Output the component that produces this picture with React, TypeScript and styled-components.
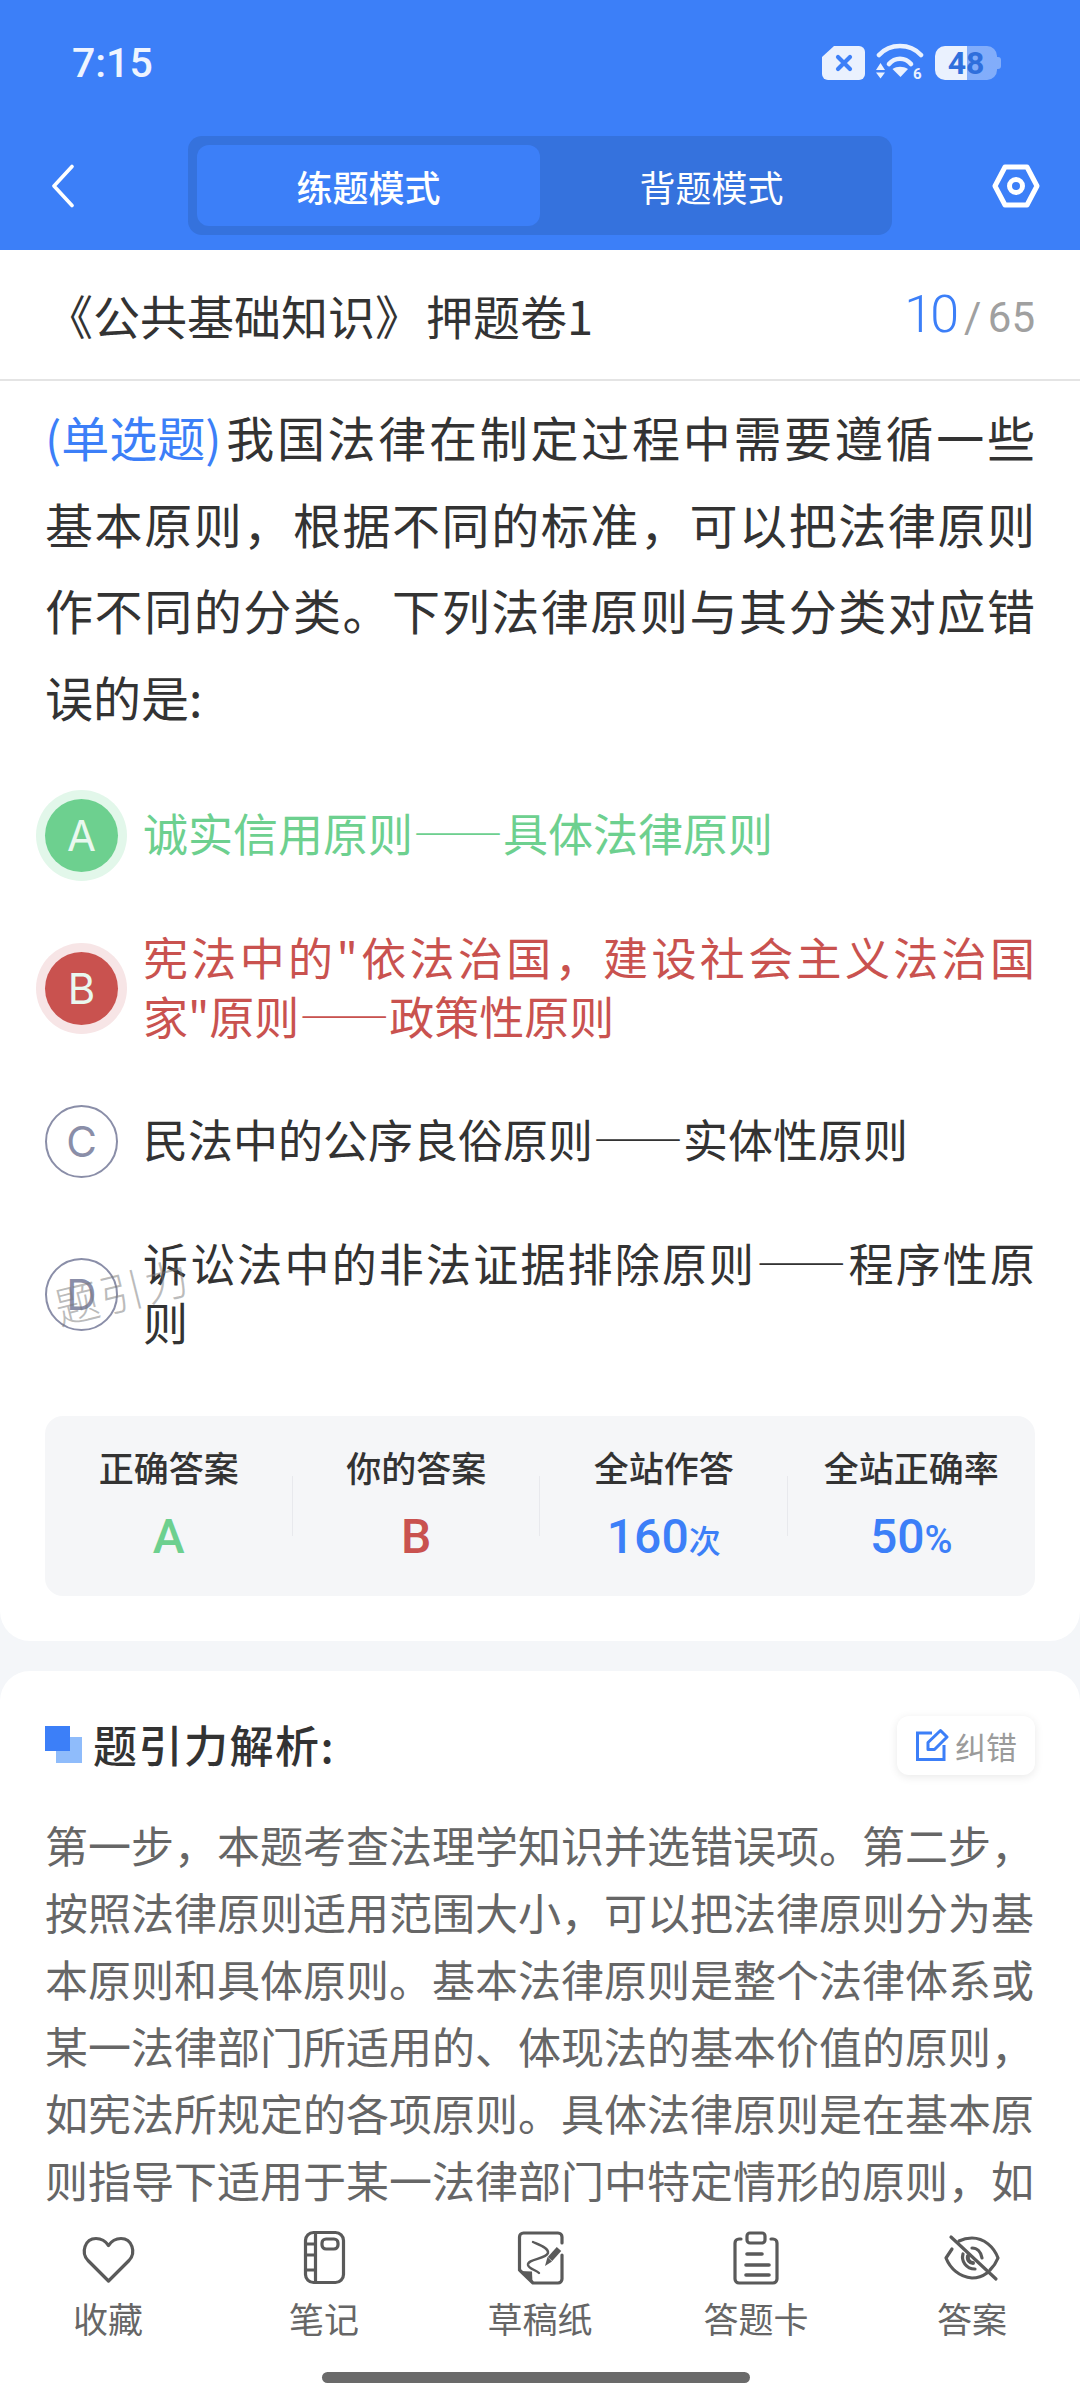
import React from "react";
import styled, { createGlobalStyle } from "styled-components";

const BLUE = "#3c7ff8";
const GREEN = "#6dd08f";
const RED = "#c9524f";
const CJK = `"Noto Sans CJK SC", "Noto Sans", sans-serif`;
const LATIN = `Roboto, "Noto Sans CJK SC", sans-serif`;

const Global = createGlobalStyle`
  html, body { margin: 0; padding: 0; background: #f4f6f9; }
  * { box-sizing: border-box; }
  body { font-family: ${CJK}; }
`;

const Page = styled.div`
  position: relative;
  width: 1080px;
  height: 2400px;
  overflow: hidden;
  background: #f4f6f9;
  display: flex;
  flex-direction: column;
`;

const Header = styled.header`
  height: 250px;
  background: ${BLUE};
`;

const StatusBar = styled.div`
  height: 136px;
  padding: 0 83px 10px 72px;
  display: flex;
  align-items: center;
  justify-content: space-between;
`;

const Clock = styled.span`
  font: 500 41px/1 ${LATIN};
  color: #eef4ff;
`;

const StatusIcons = styled.div`
  display: flex;
  align-items: center;
  gap: 11px;
`;

const Battery = styled.div`
  position: relative;
  width: 62px;
  height: 34px;
  border-radius: 10px;
  background: linear-gradient(to right, #eaf1fe 0 52%, rgba(255, 255, 255, 0.36) 52% 100%);
  display: flex;
  align-items: center;
  justify-content: center;
  font: 700 32px/1 ${LATIN};
  color: #2f6fdc;
  &::after {
    content: "";
    position: absolute;
    right: -4px;
    top: 11px;
    width: 4px;
    height: 12px;
    border-radius: 0 3px 3px 0;
    background: rgba(255, 255, 255, 0.36);
  }
`;

const NavBar = styled.nav`
  height: 99px;
  padding-right: 40px;
  display: flex;
  align-items: center;
`;

const BackSlot = styled.div`
  width: 188px;
  padding-left: 51px;
  display: flex;
  align-items: center;
`;

const Tabs = styled.div`
  width: 704px;
  height: 99px;
  padding: 9px;
  border-radius: 14px;
  background: #3572dd;
  display: grid;
  grid-template-columns: 343px 1fr;
`;

const Tab = styled.div<{ $active?: boolean }>`
  display: flex;
  align-items: center;
  justify-content: center;
  border-radius: 12px;
  font-size: 36px;
  line-height: 1;
  font-weight: ${(p) => (p.$active ? 500 : 400)};
  color: #fff;
  background: ${(p) => (p.$active ? BLUE : "transparent")};
`;

const SettingsSlot = styled.div`
  margin-left: auto;
  display: flex;
`;

const TitleRow = styled.div`
  flex: none;
  height: 131px;
  padding: 0 45px 0 46px;
  background: #fff;
  border-bottom: 2px solid #e4e4e4;
  display: flex;
  align-items: center;
  justify-content: space-between;
`;

const PaperTitle = styled.h1`
  margin: 0;
  font-size: 47px;
  line-height: 1;
  font-weight: 400;
  color: #333;
`;

const TitleSuffix = styled.span`
  margin-left: 4px;
`;

const Progress = styled.div`
  display: flex;
  align-items: baseline;
  gap: 8px;
  font-family: ${LATIN};
`;

const Current = styled.span`
  font-size: 52px;
  font-weight: 300;
  letter-spacing: -3px;
  color: ${BLUE};
`;

const Total = styled.span`
  font-size: 42px;
  font-weight: 400;
  word-spacing: -4px;
  color: #a0a0a0;
`;

const QuestionCard = styled.section`
  flex: none;
  background: #fff;
  border-radius: 0 0 30px 30px;
  padding: 12px 45px 45px;
`;

const Question = styled.p`
  margin: 0;
  font-size: 48px;
  line-height: 86.5px;
  color: #333;
  text-align: justify;
`;

const Tag = styled.span`
  display: inline-block;
  margin-right: 2px;
  color: ${BLUE};
`;

const NoBreak = styled.span`
  white-space: nowrap;
`;

const Dash = styled.span`
  font-feature-settings: "fwid";
`;

const Options = styled.div`
  margin-top: 60px;
  display: flex;
  flex-direction: column;
  gap: 54.5px;
`;

const tones = {
  right: { main: GREEN, halo: "#e2f7ea" },
  wrong: { main: RED, halo: "#f7e5e6" },
};

const OptionRow = styled.div`
  display: flex;
  align-items: center;
  gap: 26px;
`;

const Marker = styled.div<{ $tone?: "right" | "wrong" }>`
  flex: none;
  width: 73px;
  height: 73px;
  border-radius: 50%;
  display: flex;
  align-items: center;
  justify-content: center;
  font: 400 42px/1 Inter, sans-serif;
  background: ${(p) => (p.$tone ? tones[p.$tone].main : "#fff")};
  color: ${(p) => (p.$tone ? "#e9f8ef" : "#8a8ea8")};
  border: ${(p) => (p.$tone ? "none" : "2px solid #8a8ea8")};
  box-shadow: ${(p) => (p.$tone ? `0 0 0 9px ${tones[p.$tone].halo}` : "none")};
`;

const OptionText = styled.div<{ $tone?: "right" | "wrong" }>`
  flex: 1;
  margin-left: -1px;
  padding-bottom: 6px;
  font-size: 45px;
  line-height: 59px;
  text-align: justify;
  color: ${(p) => (p.$tone ? tones[p.$tone].main : "#333")};
`;

const Watermark = styled.div`
  position: absolute;
  left: 53px;
  top: 1268px;
  font-size: 44px;
  line-height: 1;
  letter-spacing: 2px;
  font-weight: 300;
  color: rgba(120, 120, 120, 0.5);
  transform: rotate(-14deg);
  pointer-events: none;
`;

const Stats = styled.div`
  margin-top: 59px;
  height: 180px;
  border-radius: 18px;
  background: #f5f6f8;
  display: grid;
  grid-template-columns: repeat(4, 1fr);
`;

const Stat = styled.div`
  position: relative;
  display: flex;
  flex-direction: column;
  align-items: center;
  padding-top: 30px;
  &:not(:last-child)::after {
    content: "";
    position: absolute;
    right: 0;
    top: 60px;
    width: 1px;
    height: 60px;
    background: #e8e9ed;
  }
`;

const StatLabel = styled.div`
  font-size: 35px;
  line-height: 42px;
  font-weight: 500;
  color: #333;
`;

const StatValue = styled.div<{ $color: string }>`
  margin-top: 24px;
  font: 500 48px/50px ${LATIN};
  color: ${(p) => p.$color};
`;

const Unit = styled.span<{ $size: number }>`
  font-size: ${(p) => p.$size}px;
  font-weight: 500;
`;

const AnalysisCard = styled.section`
  flex: 1;
  margin-top: 30px;
  background: #fff;
  border-radius: 30px 30px 0 0;
  padding: 45px 45px 0;
`;

const AnalysisHead = styled.div`
  display: flex;
  align-items: center;
  justify-content: space-between;
`;

const AnalysisTitle = styled.h2`
  margin: 0;
  padding-bottom: 2px;
  display: flex;
  align-items: center;
  gap: 11px;
  font-size: 44px;
  line-height: 1;
  letter-spacing: 1.5px;
  font-weight: 500;
  color: #333;
`;

const TitleMark = styled.span`
  position: relative;
  width: 37px;
  height: 37px;
  &::before {
    content: "";
    position: absolute;
    right: 0;
    bottom: 0;
    width: 26px;
    height: 26px;
    background: #8fbcfb;
  }
  &::after {
    content: "";
    position: absolute;
    left: 0;
    top: 0;
    width: 25px;
    height: 25px;
    background: ${BLUE};
  }
`;

const ReportButton = styled.div`
  width: 138px;
  height: 59px;
  border-radius: 12px;
  background: #fff;
  box-shadow: 0 2px 10px rgba(0, 0, 0, 0.09);
  display: flex;
  align-items: center;
  justify-content: center;
  gap: 6px;
  font-size: 31px;
  color: #9b9b9b;
`;

const AnalysisBody = styled.p`
  margin: 36px 0 0;
  font-size: 43px;
  line-height: 67px;
  color: #666;
`;

const BottomNav = styled.nav`
  position: absolute;
  left: 0;
  right: 0;
  bottom: 0;
  height: 188px;
  padding-top: 16px;
  background: #fff;
`;

const NavGrid = styled.div`
  display: grid;
  grid-template-columns: repeat(5, 216px);
`;

const NavItem = styled.div`
  display: flex;
  flex-direction: column;
  align-items: center;
  gap: 6px;
  font-size: 35px;
  line-height: 48px;
  color: #666;
`;

const HomeBar = styled.div`
  width: 428px;
  height: 11px;
  margin: 30px 0 0 322px;
  border-radius: 6px;
  background: #6a6a6a;
`;

const ICON = "#5a5a5a";

const IconSvg = styled.svg.attrs({ viewBox: "0 0 60 60", width: 60, height: 60 })`
  display: block;
  fill: none;
  stroke: ${ICON};
  stroke-width: 3.2;
  stroke-linecap: round;
  stroke-linejoin: round;
`;

const HeartIcon = () => (
  <IconSvg>
    <path d="M30.5 53 L10 32.5 C2.5 24.5 7 10.5 18 10.5 C23.5 10.5 27.5 13 30.5 17.5 C33.5 13 37.5 10.5 43 10.5 C54 10.5 58.5 24.5 51 32.5 Z" />
  </IconSvg>
);

const NoteIcon = () => (
  <IconSvg>
    <rect x="11.5" y="4.5" width="38" height="50" rx="8" />
    <path d="M21.5 4.5 V54.5 M11.5 16 H21.5 M11.5 27 H21.5 M11.5 42 H21.5" />
    <rect x="28" y="11" width="16" height="10" rx="4" />
  </IconSvg>
);

const DraftIcon = () => (
  <IconSvg>
    <path d="M9.5 42 V9 a4 4 0 0 1 4 -4 H48 a4 4 0 0 1 4 4 V15 M52 27 V51 a4 4 0 0 1 -4 4 H23 L9.5 42" />
    <path d="M10 43 L22 43.5 L22.5 55 Z" fill={ICON} stroke="none" />
    <path d="M23 14 C30 17 39 20 38 25 C36 31 17 31 18 37 C19 41 26 42 29 45" strokeWidth="2.4" />
    <path d="M49 21 L40 31" strokeWidth="6" strokeLinecap="butt" />
    <path d="M37.5 29 L42 33.5 L35 38 Z" fill={ICON} stroke="none" />
  </IconSvg>
);

const CardIcon = () => (
  <IconSvg>
    <path d="M15 11 H13 a4 4 0 0 0 -4 4 V51 a4 4 0 0 0 4 4 H47 a4 4 0 0 0 4 -4 V15 a4 4 0 0 0 -4 -4 H45" />
    <rect x="21" y="5" width="18" height="10" rx="3" />
    <path d="M21 26 H36 M20 37 H43 M20 47 H43" strokeWidth="3.6" />
  </IconSvg>
);

const EyeOffIcon = () => (
  <IconSvg>
    <path d="M10 21 L4 30 C8 40 17 49 30 50 C36 50 41 48 45 45 M17 13 C21 11 26 10 30 10 C42 10 52 19 56 30 C54 35 51 39 48 42" />
    <path d="M9 9 L54 51" />
    <path d="M21 26 C19 33 24 41 33 41 M30 20 C35 20 39 24 40 30" />
    <path d="M26 28 C25 32 28 35 31 35" strokeWidth="4" />
  </IconSvg>
);

const SimOff = () => (
  <svg width="43" height="34" viewBox="0 0 43 34">
    <path d="M12 0 H37 a6 6 0 0 1 6 6 V28 a6 6 0 0 1 -6 6 H6 a6 6 0 0 1 -6 -6 V11 Z" fill="#eaf1fe" />
    <path d="M16 11 L28 23 M28 11 L16 23" stroke={BLUE} strokeWidth="4.2" strokeLinecap="round" />
  </svg>
);

const WifiIcon = () => (
  <svg width="48" height="40" viewBox="0 0 48 40">
    <path d="M3 12 C14 0 34 0 45 12" fill="none" stroke="#eaf1fe" strokeWidth="4.6" strokeLinecap="round" />
    <path d="M13 21 C19 14 29 14 35 21" fill="none" stroke="#eaf1fe" strokeWidth="4.6" strokeLinecap="round" />
    <path d="M16.5 26 C21 23 27 23 32 26 L24.5 34 Z" fill="#eaf1fe" />
    <path d="M0 27 L4.5 20 L9 27 Z M0 29.5 H9 L4.5 35.5 Z" fill="#eaf1fe" />
    <text x="37" y="36" fontFamily="Roboto, sans-serif" fontWeight="700" fontSize="15" fill="#eaf1fe">6</text>
  </svg>
);

const BackIcon = () => (
  <svg width="24" height="44" viewBox="0 0 24 44" fill="none" stroke="#fff" strokeWidth="3.6" strokeLinecap="round" strokeLinejoin="round">
    <path d="M21 2.5 L3 22 L21 41.5" />
  </svg>
);

const SettingsIcon = () => (
  <svg width="48" height="44" viewBox="0 0 48 44" fill="none" stroke="#fff" strokeWidth="5" strokeLinejoin="round">
    <path d="M3 22 L13 3 H35 L45 22 L35 41 H13 Z" />
    <circle cx="24" cy="22" r="6.5" />
  </svg>
);

const EditIcon = () => (
  <svg width="34" height="34" viewBox="0 0 34 34" fill="none" stroke={BLUE} strokeWidth="3">
    <path d="M17 5 H2.5 V31.5 H29 V17" />
    <path d="M13 21.5 V14.5 L25.5 2.5 L32 9 L19.5 21.5 Z" strokeLinejoin="round" />
  </svg>
);

const navItems = [
  { label: "收藏", icon: <HeartIcon /> },
  { label: "笔记", icon: <NoteIcon /> },
  { label: "草稿纸", icon: <DraftIcon /> },
  { label: "答题卡", icon: <CardIcon /> },
  { label: "答案", icon: <EyeOffIcon /> },
];

export default function App() {
  return (
    <Page>
      <Global />
      <Header>
        <StatusBar>
          <Clock>7:15</Clock>
          <StatusIcons>
            <SimOff />
            <WifiIcon />
            <Battery>48</Battery>
          </StatusIcons>
        </StatusBar>
        <NavBar>
          <BackSlot>
            <BackIcon />
          </BackSlot>
          <Tabs>
            <Tab $active>练题模式</Tab>
            <Tab>背题模式</Tab>
          </Tabs>
          <SettingsSlot>
            <SettingsIcon />
          </SettingsSlot>
        </NavBar>
      </Header>

      <TitleRow>
        <PaperTitle>
          《公共基础知识》<TitleSuffix>押题卷1</TitleSuffix>
        </PaperTitle>
        <Progress>
          <Current>10</Current>
          <Total>/ 65</Total>
        </Progress>
      </TitleRow>

      <QuestionCard>
        <Question>
          <Tag>(单选题)</Tag>我国法律在制定过程中需要遵循一些<NoBreak>基本原则</NoBreak>，根据不同的标准，可以把法律原则作不同的分类。下列法律原则与其分类对应错误的是:
        </Question>
        <Options>
          <OptionRow>
            <Marker $tone="right">A</Marker>
            <OptionText $tone="right">诚实信用原则<Dash>——</Dash>具体法律原则</OptionText>
          </OptionRow>
          <OptionRow>
            <Marker $tone="wrong">B</Marker>
            <OptionText $tone="wrong">
              宪法中的"依法治国，建设社会主义法治国<NoBreak>家"原则</NoBreak><Dash>——</Dash>政策性原则
            </OptionText>
          </OptionRow>
          <OptionRow>
            <Marker>C</Marker>
            <OptionText>民法中的公序良俗原则<Dash>——</Dash>实体性原则</OptionText>
          </OptionRow>
          <OptionRow>
            <Marker>D</Marker>
            <OptionText>诉讼法中的非法证据排除原则<Dash>——</Dash>程序性原则</OptionText>
          </OptionRow>
        </Options>
        <Stats>
          <Stat>
            <StatLabel>正确答案</StatLabel>
            <StatValue $color={GREEN}>A</StatValue>
          </Stat>
          <Stat>
            <StatLabel>你的答案</StatLabel>
            <StatValue $color={RED}>B</StatValue>
          </Stat>
          <Stat>
            <StatLabel>全站作答</StatLabel>
            <StatValue $color={BLUE}>
              160<Unit $size={32}>次</Unit>
            </StatValue>
          </Stat>
          <Stat>
            <StatLabel>全站正确率</StatLabel>
            <StatValue $color={BLUE}>
              50<Unit $size={38}>%</Unit>
            </StatValue>
          </Stat>
        </Stats>
      </QuestionCard>

      <Watermark>题引力</Watermark>

      <AnalysisCard>
        <AnalysisHead>
          <AnalysisTitle>
            <TitleMark />
            题引力解析:
          </AnalysisTitle>
          <ReportButton>
            <EditIcon />
            纠错
          </ReportButton>
        </AnalysisHead>
        <AnalysisBody>
          第一步，本题考查法理学知识并选错误项。第二步，按照法律原则适用范围大小，可以把法律原则分为基本原则和具体原则。基本法律原则是整个法律体系或某一法律部门所适用的、体现法的基本价值的原则，如宪法所规定的各项原则。具体法律原则是在基本原则指导下适用于某一法律部门中特定情形的原则，如
        </AnalysisBody>
      </AnalysisCard>

      <BottomNav>
        <NavGrid>
          {navItems.map((item) => (
            <NavItem key={item.label}>
              {item.icon}
              {item.label}
            </NavItem>
          ))}
        </NavGrid>
        <HomeBar />
      </BottomNav>
    </Page>
  );
}
